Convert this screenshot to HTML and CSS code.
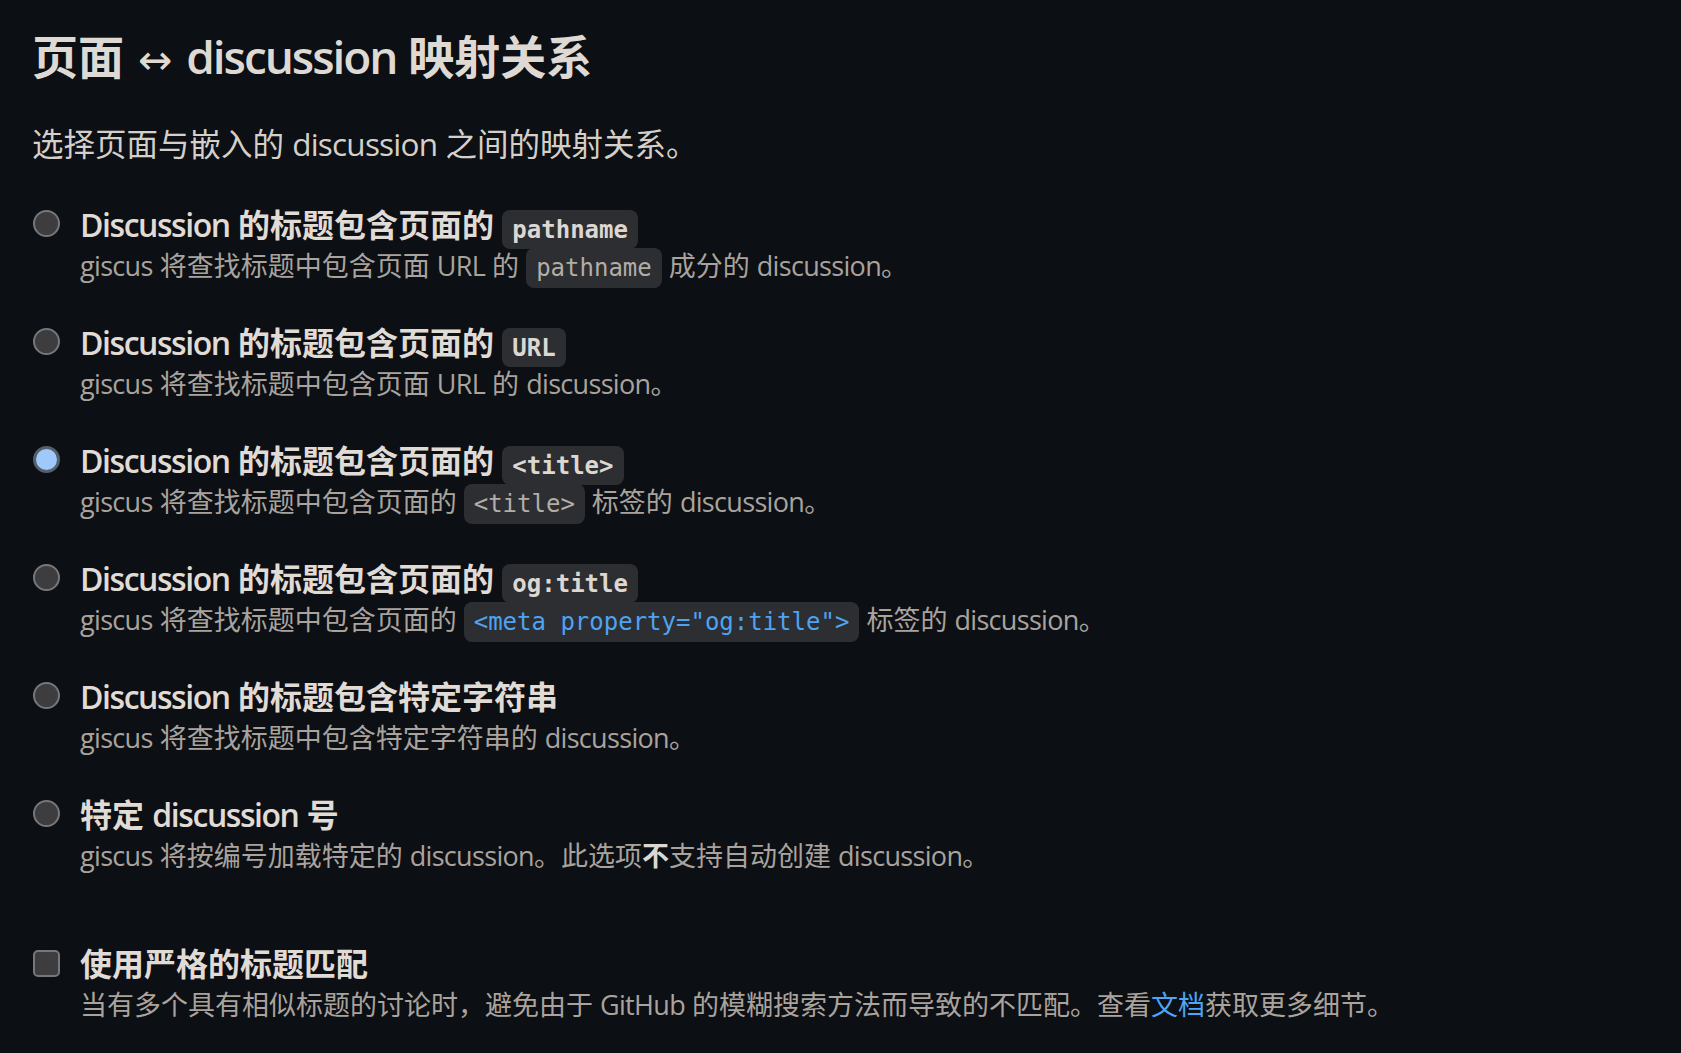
FILE: index.html
```html
<!DOCTYPE html>
<html lang="zh-CN">
<head>
<meta charset="utf-8">
<title>页面 ↔ discussion 映射关系</title>
<link rel="stylesheet" href="styles.css">
</head>
<body>
<main class="page">
  <h2 class="title">页面 <span class="arrow">↔</span> <span class="lat">discussion</span> 映射关系</h2>
  <p class="lead">选择页面与嵌入的 <span class="en">discussion</span> 之间的映射关系。</p>

  <div class="options">
    <label class="option">
      <span class="radio"></span>
      <span class="text">
        <span class="opt-title"><span class="lat">Discussion</span> 的标题包含页面的 <code>pathname</code></span>
        <span class="opt-desc"><span class="en">giscus</span> 将查找标题中包含页面 <span class="en">URL</span> 的 <code>pathname</code> 成分的 <span class="en">discussion</span>。</span>
      </span>
    </label>

    <label class="option">
      <span class="radio"></span>
      <span class="text">
        <span class="opt-title"><span class="lat">Discussion</span> 的标题包含页面的 <code>URL</code></span>
        <span class="opt-desc"><span class="en">giscus</span> 将查找标题中包含页面 <span class="en">URL</span> 的 <span class="en">discussion</span>。</span>
      </span>
    </label>

    <label class="option">
      <span class="radio checked"></span>
      <span class="text">
        <span class="opt-title"><span class="lat">Discussion</span> 的标题包含页面的 <code>&lt;title&gt;</code></span>
        <span class="opt-desc"><span class="en">giscus</span> 将查找标题中包含页面的 <code>&lt;title&gt;</code> 标签的 <span class="en">discussion</span>。</span>
      </span>
    </label>

    <label class="option">
      <span class="radio"></span>
      <span class="text">
        <span class="opt-title"><span class="lat">Discussion</span> 的标题包含页面的 <code>og:title</code></span>
        <span class="opt-desc"><span class="en">giscus</span> 将查找标题中包含页面的 <code class="blue">&lt;meta property="og:title"&gt;</code> 标签的 <span class="en">discussion</span>。</span>
      </span>
    </label>

    <label class="option">
      <span class="radio"></span>
      <span class="text">
        <span class="opt-title"><span class="lat">Discussion</span> 的标题包含特定字符串</span>
        <span class="opt-desc"><span class="en">giscus</span> 将查找标题中包含特定字符串的 <span class="en">discussion</span>。</span>
      </span>
    </label>

    <label class="option">
      <span class="radio"></span>
      <span class="text">
        <span class="opt-title">特定 <span class="lat">discussion</span> 号</span>
        <span class="opt-desc"><span class="en">giscus</span> 将按编号加载特定的 <span class="en">discussion</span>。此选项<strong>不</strong>支持自动创建 <span class="en">discussion</span>。</span>
      </span>
    </label>
  </div>

  <label class="option strict">
    <span class="checkbox"></span>
    <span class="text">
      <span class="opt-title">使用严格的标题匹配</span>
      <span class="opt-desc">当有多个具有相似标题的讨论时，避免由于 <span class="en">GitHub</span> 的模糊搜索方法而导致的不匹配。查看<a class="link" href="#">文档</a>获取更多细节。</span>
    </span>
  </label>
</main>
</body>
</html>
```

FILE: styles.css
```css
html, body {
  margin: 0;
  padding: 0;
  background: #0c0f13;
}

body {
  font-family: "Open Sans", "Noto Sans CJK SC", sans-serif;
  color: #ddd7d1;
  width: 1681px;
  height: 1053px;
  overflow: hidden;
}

.page {
  padding: 26px 33px 0 32px;
}

.en {
  letter-spacing: -0.025em;
}

.title {
  margin: 0;
  font-size: 46px;
  line-height: 60px;
  font-weight: 700;
  color: #dfd9d3;
}

.title .arrow {
  font-family: "DejaVu Sans", sans-serif;
  font-weight: 400;
  font-size: 41px;
  line-height: 1;
  margin: 0 2px;
}

.title .lat {
  font-weight: 600;
  letter-spacing: -0.045em;
}

.lead {
  margin: 37px 0 0 0;
  font-size: 31.5px;
  line-height: 42px;
  color: #d5cfc9;
}

.options {
  margin-top: 39px;
  display: flex;
  flex-direction: column;
  gap: 36px;
}

.option {
  display: flex;
  align-items: flex-start;
  gap: 20px;
}

.strict {
  margin-top: 67px;
}

.radio {
  flex: none;
  box-sizing: border-box;
  width: 27px;
  height: 27px;
  margin-top: 6px;
  margin-left: 1px;
  border-radius: 50%;
  background: #3d3d3f;
  border: 2.5px solid #76777a;
}

.radio.checked {
  background: #9fc8fb;
  border: 3px solid #55606d;
}

.checkbox {
  flex: none;
  box-sizing: border-box;
  width: 27px;
  height: 27px;
  margin-top: 7px;
  margin-left: 1px;
  border-radius: 5px;
  background: #3d3d3f;
  border: 2.5px solid #76777a;
}

.text {
  display: flex;
  flex-direction: column;
}

.opt-title {
  display: block;
  font-size: 32px;
  line-height: 42px;
  font-weight: 700;
  color: #e1dbd6;
}

.opt-title .lat {
  font-weight: 600;
  letter-spacing: -0.045em;
}

.opt-desc {
  display: block;
  font-size: 27px;
  line-height: 40px;
  color: #aaa39d;
}

.opt-desc strong {
  font-weight: 700;
  color: #ddd7d1;
}

code {
  font-family: "DejaVu Sans Mono", monospace;
  font-size: 24px;
  line-height: 28px;
  padding: 5.5px 10px;
  border-radius: 8px;
  background: #2c2e32;
}

.opt-title code {
  font-weight: 700;
  color: #ddd7d1;
}

.opt-desc code {
  padding: 6px 10px;
  color: #b3ada7;
}

.opt-desc code.blue {
  color: #4fa3f0;
}

.link {
  color: #4ea4f5;
  text-decoration: none;
}
```
